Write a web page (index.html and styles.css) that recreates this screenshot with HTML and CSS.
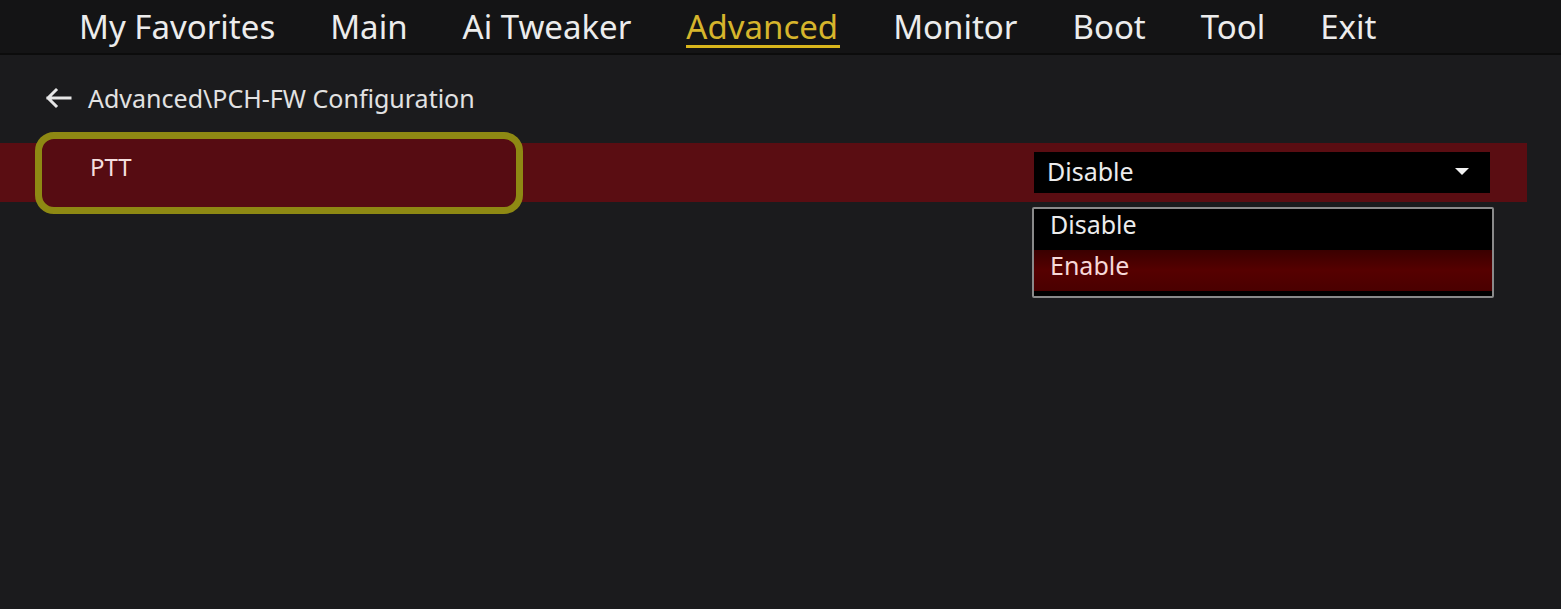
FILE: index.html
```html
<!DOCTYPE html>
<html>
  <head>
    <title>BIOS - Advanced</title>
    <link rel="stylesheet" href="styles.css">
  </head>
  <body>
    <div class="topbar">
      <nav class="tabs">
        <span class="tab">My Favorites</span>
        <span class="tab">Main</span>
        <span class="tab">Ai Tweaker</span>
        <span class="tab active">Advanced</span>
        <span class="tab">Monitor</span>
        <span class="tab">Boot</span>
        <span class="tab">Tool</span>
        <span class="tab">Exit</span>
      </nav>
    </div>
    <div class="page">
      <div class="crumb">
        <svg class="back" width="28" height="22" viewBox="0 0 28 22">
          <path d="M26 11H4M12 3L4 11l8 8" fill="none" stroke="#e6e6e6" stroke-width="3" stroke-linecap="square"/>
        </svg>
        <span>Advanced\PCH-FW Configuration</span>
      </div>
      <div class="row">
        <div class="item">PTT</div>
        <div class="select-wrap">
          <div class="select">
            <span>Disable</span>
            <svg width="16" height="10" viewBox="0 0 16 10"><path d="M1 2h14l-7 7z" fill="#f2f2f2"/></svg>
          </div>
          <ul class="options">
            <li>Disable</li>
            <li class="hover">Enable</li>
          </ul>
        </div>
      </div>
    </div>
  </body>
</html>
```
FILE: styles.css
```css
body {
  margin: 0;
  background-color: #1b1b1d;
  font-family: "Noto Sans", "Open Sans", sans-serif;
  color: #e6e6e6;
  height: 609px;
  overflow: hidden;
}
.topbar {
  height: 53px;
  background-color: #141415;
  border-bottom: 2px solid #0c0c0c;
}
.tabs {
  display: flex;
  gap: 55px;
  padding-left: 79px;
}
.tab {
  font-size: 33px;
  line-height: 54px;
  color: #ececec;
  position: relative;
}
.tab.active {
  color: #d6b52c;
}
.tab.active::after {
  content: "";
  position: absolute;
  left: 0;
  right: -2px;
  top: 45px;
  height: 3px;
  background-color: #d9b61c;
}
.crumb {
  display: flex;
  align-items: center;
  gap: 16px;
  padding: 26px 0 0 44px;
  height: 34px;
  font-size: 25px;
  color: #e2e2e2;
}
.back {
  display: block;
}
.row {
  display: flex;
  align-items: center;
  justify-content: space-between;
  margin-top: 28px;
  width: 1527px;
  height: 59px;
  background-color: #5a0d12;
}
.item {
  box-sizing: border-box;
  width: 488px;
  height: 82px;
  margin-left: 35px;
  border: 7px solid #8e8913;
  border-radius: 19px;
  background-color: #560c12;
  padding: 11px 0 0 48px;
  font-size: 24px;
  color: #f4dede;
}
.select-wrap {
  position: relative;
  margin-right: 37px;
}
.select {
  box-sizing: border-box;
  width: 456px;
  height: 41px;
  background-color: #000;
  display: flex;
  align-items: center;
  justify-content: space-between;
  padding: 0 20px 3px 13px;
  font-size: 25px;
  color: #ececec;
}
.options {
  position: absolute;
  top: 55px;
  left: -2px;
  width: 458px;
  margin: 0;
  padding: 0 0 5px;
  list-style: none;
  background-color: #000;
  border: 2px solid #8a8a8a;
  border-radius: 2px;
}
.options li {
  height: 41px;
  line-height: 31px;
  padding-left: 16px;
  font-size: 25px;
  color: #ececec;
}
.options li.hover {
  background: linear-gradient(#3a0000, #560000 50%, #4a0000);
  color: #f6d8d8;
}
```
